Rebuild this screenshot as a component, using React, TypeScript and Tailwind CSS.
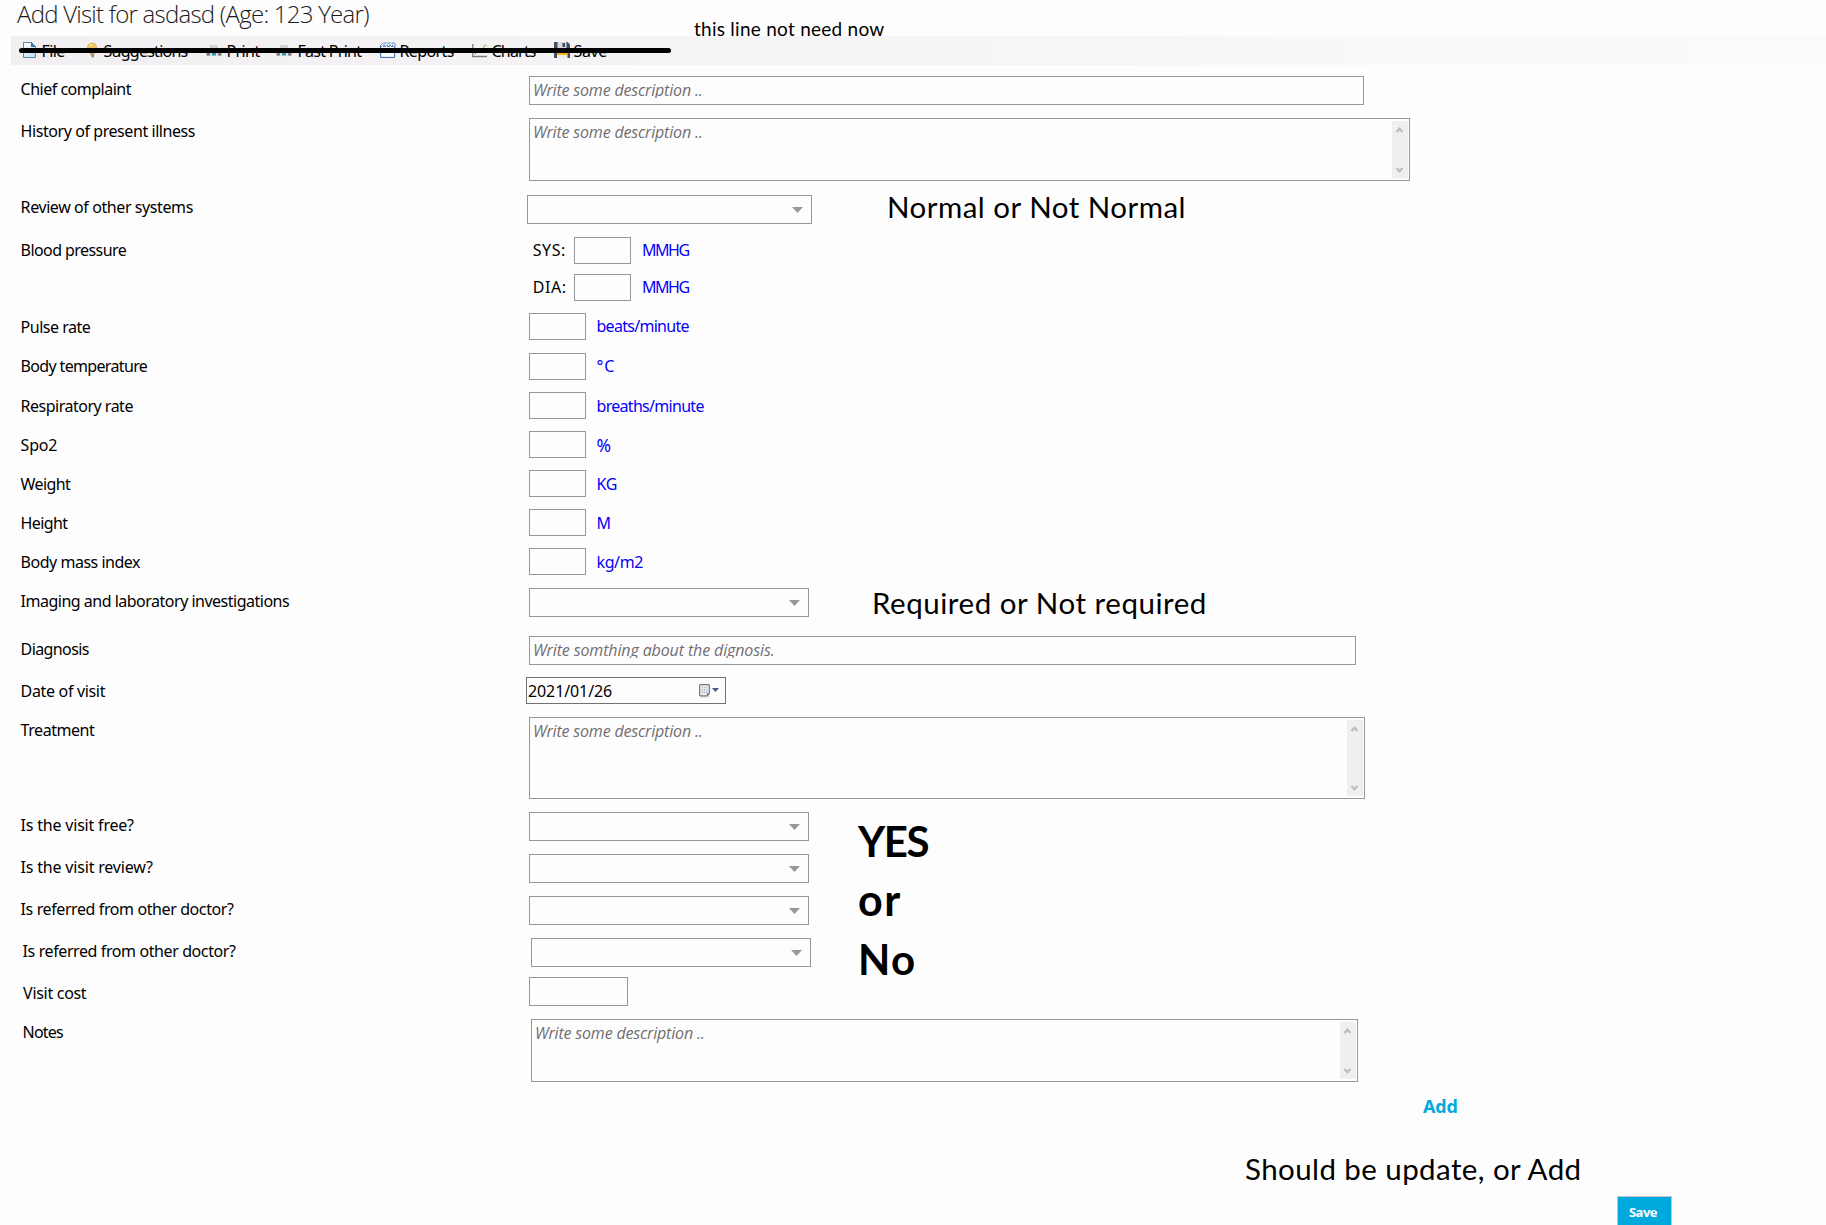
import type { ReactNode } from "react";

/* ---------- icons ---------- */

const FileIcon = () => (
  <svg width="16" height="16" viewBox="0 0 16 16">
    <defs>
      <linearGradient id="sheet" x1="0" y1="0" x2="1" y2="1">
        <stop offset="0" stopColor="#ffffff" />
        <stop offset="1" stopColor="#b9dbee" />
      </linearGradient>
    </defs>
    <path d="M1.5 .5h8l4 4v11h-12z" fill="url(#sheet)" stroke="#5b87a6" />
    <path d="M9.5 .5v4h4" fill="#3f86b5" stroke="#3f7296" />
  </svg>
);

const BulbIcon = () => (
  <svg width="13" height="16" viewBox="0 0 13 16">
    <path d="M6 1a4.6 4.6 0 0 1 4.6 4.4c0 2-1.6 2.7-2 4.6H3.6C3.2 8.1 1.5 7.4 1.5 5.4A4.6 4.6 0 0 1 6 1z" fill="#ecc76a" stroke="#cfa94c" strokeWidth=".7" />
    <path d="M3.5 3.5 5.5 2l.5 2z" fill="#fff6d2" />
    <path d="M4 10.5h4.5v2H4z" fill="#c99f4a" />
    <path d="M4.5 12.5h4l-1 3H6z" fill="#8b8a88" />
  </svg>
);

const PrinterIcon = () => (
  <svg width="16" height="16" viewBox="0 0 16 16">
    <path d="M4 3h8v5H4z" fill="#d4d4d6" />
    <path d="M3 6h10l2.5 4.5v3H.5v-3z" fill="#858588" />
    <path d="M1 12h14v1.500H1z" fill="#737377" />
    <path d="M4.5 10h7l1 4h-9z" fill="#d9e4ea" />
    <path d="M6 10h4v3.500H6z" fill="#2b9cb4" />
  </svg>
);

const ReportIcon = () => (
  <svg width="16" height="16" viewBox="0 0 16 16">
    <path d="M.6 3.5V15.4h14V1.5" fill="#fdfdff" stroke="#2f66ad" />
    <path d="M.6 3.5 3 1h12v3.5H.6z" fill="#f3f6fc" stroke="#2f66ad" strokeWidth=".8" strokeDasharray="3 1" />
    <path d="M3 3.2h10" stroke="#2f66ad" strokeWidth=".9" strokeDasharray="2 1" />
  </svg>
);

const ChartIcon = () => (
  <svg width="16" height="16" viewBox="0 0 16 16" fill="none">
    <path d="M.8 2v12.5H15" stroke="#7d7d7d" strokeWidth="1.3" />
    <path d="M3 12l3.5-4 2 2.5L12 7" stroke="#5e5e5e" />
    <path d="M11 7 12 4.5c.5-1.5 1.5-1.5 2.5-1" stroke="#9dbf4a" strokeWidth="1.2" />
  </svg>
);

const DiskIcon = () => (
  <svg width="16" height="16" viewBox="0 0 16 16">
    <path d="M0 0h13.5L16 2.5V16H0z" fill="#454c63" />
    <path d="M3.5 0h9v7h-9z" fill="#d5d8dc" />
    <path d="M8.5 1H11v4H8.5z" fill="#454c63" />
    <path d="M3 9h10.5v7H3z" fill="#e9eaec" />
    <path d="M3 9h10.5v4H3z" fill="#f6b410" />
  </svg>
);

const Caret = () => (
  <svg width="11" height="6" viewBox="0 0 11 6">
    <path d="M0 0h11L5.5 6z" fill="#999799" />
  </svg>
);

const Chevron = ({ flip = false }: { flip?: boolean }) => (
  <svg width="7" height="6" viewBox="0 0 7 6" className={flip ? "rotate-180" : ""}>
    <path d="M.5 5 3.5 1.7 6.5 5" fill="none" stroke="#bdbbbd" strokeWidth="2.2" />
  </svg>
);

const CalendarIcon = () => (
  <svg width="12" height="14" viewBox="0 0 12 14">
    <path d="M1.5 13h8l1.5-1" stroke="#d8d4d4" fill="none" />
    <path d="M.7 1.5q0-.8.8-.8h8q.8 0 .8.8v8L8 11.8H1.5q-.8 0-.8-.8z" fill="#fbfbfc" stroke="#7b6d6c" strokeWidth="1.2" />
    <path d="M2.5 2.5h6v7h-6z" fill="#b9c3d6" />
    <path d="M2.5 4.5h6M2.5 7h6M4.5 2.5v7M6.5 2.5v7" stroke="#f5f7fa" strokeWidth=".6" />
    <path d="M8 11.8V9.5h2.3z" fill="#6f6563" />
  </svg>
);

/* ---------- form parts ---------- */

const Placeholder = ({ children, tone = "tracking-[-0.18px]" }: { children: ReactNode; tone?: string }) => (
  <span className={`block h-full whitespace-nowrap pl-[3px] pt-[3px] font-['Open_Sans',sans-serif] text-[16px] italic leading-[20px] text-[#706e70] ${tone}`}>
    {children}
  </span>
);

const TextInput = ({ size, children }: { size: string; children?: ReactNode }) => (
  <div className={`shrink-0 border border-[#999799] ${size}`}>
    {children && <div className="h-[21px] overflow-hidden">{children}</div>}
  </div>
);

const TextArea = ({ size }: { size: string }) => (
  <div className={`flex shrink-0 justify-between border border-[#999799] ${size}`}>
    <Placeholder>Write some description ..</Placeholder>
    <div className="mb-[2px] mr-px mt-[2px] flex w-[16px] flex-col items-center justify-between bg-[#f0eef0] pb-[5px] pr-[2px] pt-[6px]">
      <Chevron />
      <Chevron flip />
    </div>
  </div>
);

const Select = ({ size = "w-[280px]" }: { size?: string }) => (
  <div className={`flex h-[29px] shrink-0 justify-end border border-[#999799] pr-[8px] pt-[11px] ${size}`}>
    <Caret />
  </div>
);

const Row = ({
  label,
  tone,
  height,
  pad = "pt-[3px]",
  col = "w-[509px]",
  children,
}: {
  label: string;
  tone: string;
  height: string;
  pad?: string;
  col?: string;
  children: ReactNode;
}) => (
  <div className={`flex items-start ${height}`}>
    <div className={`shrink-0 whitespace-nowrap ${pad} ${col}`}>
      <span className={`pl-[0.6px] ${tone}`}>{label}</span>
    </div>
    {children}
  </div>
);

const Unit = ({ children, tone }: { children: ReactNode; tone: string }) => (
  <span className={`whitespace-nowrap pl-[10.5px] text-[#0600f5] ${tone}`}>{children}</span>
);

const measures = [
  { label: "Pulse rate", tone: "tracking-[-0.5px]", height: "h-[40px]", pad: "pt-[4px]", unit: "beats/minute", unitTone: "pt-[3px] tracking-[-0.72px]" },
  { label: "Body temperature", tone: "tracking-[-0.66px]", height: "h-[39px]", pad: "pt-[3px]", unit: "°C", unitTone: "pt-[3px] tracking-[1px]" },
  { label: "Respiratory rate", tone: "tracking-[-0.5px]", height: "h-[39px]", pad: "pt-[4px]", unit: "breaths/minute", unitTone: "pt-[4px] tracking-[-0.7px]" },
  { label: "Spo2", tone: "tracking-[-0.2px]", height: "h-[39px]", pad: "pt-[4px]", unit: "%", unitTone: "pt-[4px] text-[17.5px]" },
  { label: "Weight", tone: "tracking-[-0.6px]", height: "h-[39px]", pad: "pt-[4px]", unit: "KG", unitTone: "pt-[4px] tracking-[-0.4px]" },
  { label: "Height", tone: "tracking-[-0.6px]", height: "h-[39px]", pad: "pt-[4px]", unit: "M", unitTone: "pt-[4px]" },
  { label: "Body mass index", tone: "tracking-[-0.48px]", height: "h-[40px]", pad: "pt-[4px]", unit: "kg/m2", unitTone: "pt-[4px] tracking-[-0.4px]" },
];

const tools = [
  { label: "File", icon: <FileIcon />, size: "w-[64px]", slot: "w-[19px]", tone: "tracking-[-0.6px]" },
  { label: "Suggestions", icon: <BulbIcon />, size: "w-[120px]", slot: "w-[17px]", tone: "tracking-[-0.74px]" },
  { label: "Print", icon: <PrinterIcon />, size: "w-[70px]", slot: "w-[20px]", tone: "tracking-[-0.6px]" },
  { label: "Fast Print", icon: <PrinterIcon />, size: "w-[104px]", slot: "w-[21px]", tone: "tracking-[-0.72px]" },
  { label: "Reports", icon: <ReportIcon />, size: "w-[92px]", slot: "w-[19px]", tone: "tracking-[-0.6px]" },
  { label: "Charts", icon: <ChartIcon />, size: "w-[82px]", slot: "w-[19px]", tone: "tracking-[-0.8px]" },
  { label: "Save", icon: <DiskIcon />, size: "w-[60px]", slot: "w-[19px]", tone: "tracking-[-0.4px]" },
];

const Note = ({ children, place }: { children: ReactNode; place: string }) => (
  <div className={`whitespace-nowrap font-['Lato',sans-serif] text-[29.5px] leading-[34px] ${place}`}>{children}</div>
);

export default function App() {
  return (
    <div className="h-[1225px] w-[1826px] overflow-hidden bg-[#fefdfe] font-['Noto_Sans',sans-serif] text-[16px] leading-[20px] text-black">
      <header className="relative">
        <h1 className="h-[36px] whitespace-nowrap pl-[17px] font-['Open_Sans',sans-serif] text-[24px] font-light leading-[27px] tracking-[-0.76px] text-[#1c1b1c]">
          Add Visit for asdasd (Age: 123 Year)
        </h1>
        <nav className="ml-[11px] flex h-[29px] bg-linear-to-r from-[#f1eff1] to-[#fcfbfc] pl-[11px] pt-[5px]">
          {tools.map((t) => (
            <div key={t.label} className={`flex shrink-0 ${t.size}`}>
              <span className={`shrink-0 pt-px ${t.slot}`}>{t.icon}</span>
              <span className={`whitespace-nowrap pl-[0.5px] ${t.tone}`}>{t.label}</span>
            </div>
          ))}
        </nav>
        {/* hand-drawn strike through the toolbar and its remark */}
        <div className="absolute left-[19px] top-[48px] h-[5px] w-[652px] rounded-full bg-black" />
        <div className="absolute left-[694px] top-[17px] whitespace-nowrap font-['Lato',sans-serif] text-[19px] leading-[23px] tracking-[0.26px]">
          this line not need now
        </div>
      </header>

      <main className="pl-[20px] pt-[11px]">
        <Row label="Chief complaint" tone="tracking-[-0.5px]" height="h-[42px]">
          <TextInput size="h-[29px] w-[835px]">
            <Placeholder>Write some description ..</Placeholder>
          </TextInput>
        </Row>
        <Row label="History of present illness" tone="tracking-[-0.43px]" height="h-[77px]">
          <TextArea size="h-[63px] w-[881px]" />
        </Row>
        <Row label="Review of other systems" tone="tracking-[-0.41px]" height="h-[42px]" pad="pt-[2px]" col="w-[507px]">
          <Select size="w-[285px]" />
          <Note place="ml-[75px] -mt-[5px] tracking-[0.48px]">Normal or Not Normal</Note>
        </Row>
        <Row label="Blood pressure" tone="tracking-[-0.57px]" height="h-[76px]">
          <div className="flex flex-col gap-[10px]">
            {["SYS:", "DIA:"].map((name) => (
              <div key={name} className="flex h-[27px] pl-[3px]">
                <span className="w-[42px] pl-[0.7px] pt-[3px] tracking-[0.6px]">{name}</span>
                <TextInput size="h-[27px] w-[57px]" />
                <Unit tone="ml-[0.6px] pt-[3px] tracking-[-1.5px]">MMHG</Unit>
              </div>
            ))}
          </div>
        </Row>
        {measures.map((m) => (
          <Row key={m.label} label={m.label} tone={m.tone} height={m.height} pad={m.pad}>
            <TextInput size="h-[27px] w-[57px]" />
            <Unit tone={m.unitTone}>{m.unit}</Unit>
          </Row>
        ))}
        <Row label="Imaging and laboratory investigations" tone="tracking-[-0.5px]" height="h-[48px]">
          <Select />
          <Note place="ml-[63px] -mt-[2px] tracking-[0.54px]">Required or Not required</Note>
        </Row>
        <Row label="Diagnosis" tone="tracking-[-0.6px]" height="h-[41px]">
          <TextInput size="h-[29px] w-[827px]">
            <Placeholder tone="tracking-[-0.12px]">Write somthing about the dignosis.</Placeholder>
          </TextInput>
        </Row>
        <Row label="Date of visit" tone="tracking-[-0.33px]" height="h-[40px]" pad="pt-[4px]" col="w-[506px]">
          <div className="flex h-[27px] w-[200px] border border-[#737173] pl-px">
            <span className="w-[171px] pt-[3px] tracking-[-0.1px]">2021/01/26</span>
            <span className="w-[13px] pt-[6px]">
              <CalendarIcon />
            </span>
            <svg width="7" height="4" viewBox="0 0 7 4" className="mt-[10px]">
              <path d="M0 0h7L3.5 4z" fill="#435a8a" />
            </svg>
          </div>
        </Row>
        <Row label="Treatment" tone="tracking-[-0.45px]" height="h-[95px]">
          <TextArea size="h-[82px] w-[836px]" />
        </Row>

        <div className="flex h-[207px]">
          <div className="w-[838px] shrink-0">
            <Row label="Is the visit free?" tone="tracking-[-0.2px]" height="h-[42px]">
              <Select />
            </Row>
            <Row label="Is the visit review?" tone="tracking-[-0.19px]" height="h-[42px]">
              <Select />
            </Row>
            <Row label="Is referred from other doctor?" tone="tracking-[-0.4px]" height="h-[42px]">
              <Select />
            </Row>
            <Row label="Is referred from other doctor?" tone="ml-[2px] tracking-[-0.4px]" height="h-[39px]" col="w-[511px]">
              <Select />
            </Row>
            <Row label="Visit cost" tone="ml-[2.5px] tracking-[-0.3px]" height="h-[42px]" pad="pt-[6px]">
              <TextInput size="h-[29px] w-[99px]" />
            </Row>
          </div>
          <div className="font-['Lato',sans-serif] text-[42px] font-bold leading-[59px]">
            <p className="tracking-[-1.4px]">YES</p>
            <p className="text-[43px] leading-[58px] tracking-[1.5px]">or</p>
            <p className="pt-px tracking-[1.2px]">No</p>
          </div>
        </div>

        <Row label="Notes" tone="ml-[2px] tracking-[-0.8px]" height="h-[63px]" col="w-[511px]">
          <TextArea size="h-[63px] w-[827px]" />
        </Row>
      </main>

      <footer>
        <div className="h-[67px] pl-[1423px] pt-[12px] font-['Open_Sans',sans-serif] text-[18px] font-bold leading-[24px] tracking-[-0.2px] text-[#00a9dd]">
          Add
        </div>
        <Note place="h-[47px] pl-[1245px] pt-[3px] tracking-[0.42px]">Should be update, or Add</Note>
        <button className="ml-[1617px] block h-[32px] w-[55px] border border-[#c3c6c9] bg-[#00a9dd] pb-px pr-[3px] font-['Open_Sans',sans-serif] text-[13px] font-bold leading-[18px] tracking-[-0.5px] text-white">
          Save
        </button>
      </footer>
    </div>
  );
}
